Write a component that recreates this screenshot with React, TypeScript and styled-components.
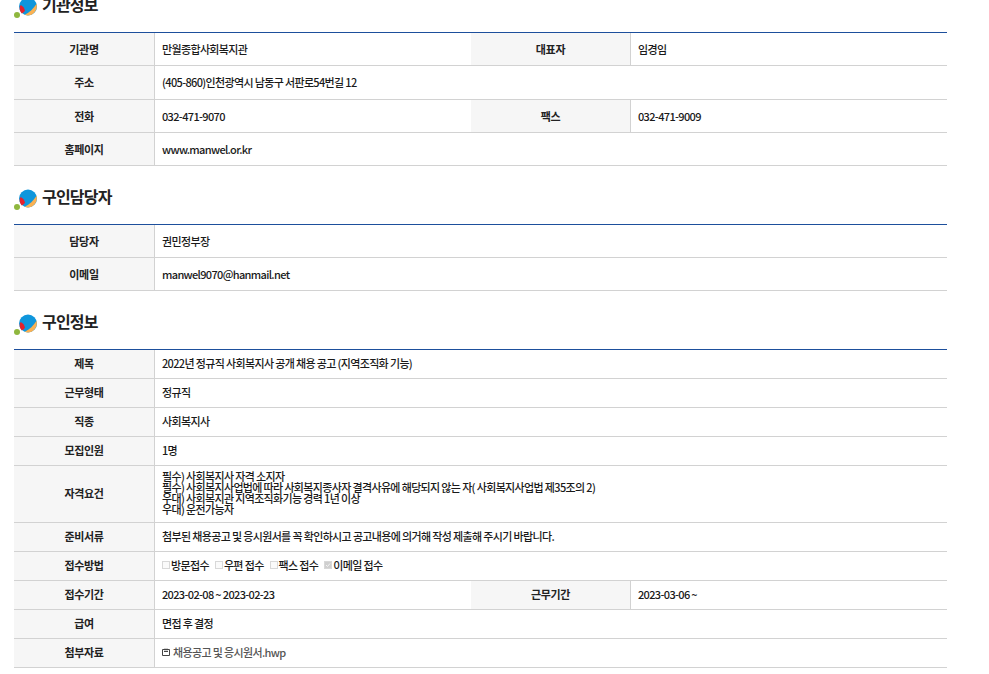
import React from "react";
import styled, { createGlobalStyle } from "styled-components";

const GlobalStyle = createGlobalStyle`
  html, body {
    margin: 0;
    padding: 0;
    background: #fff;
    overflow: hidden;
  }
  body {
    font-family: "Noto Sans CJK KR", "Noto Sans", sans-serif;
    color: #222;
  }
`;

// the page is scrolled a little in the reference, the first heading is cut off
const Page = styled.div`
  width: 933px;
  height: 700px;
  margin: -8px 0 0 14px;
`;

const Heading = styled.h3`
  display: flex;
  align-items: center;
  height: 32px;
  margin: 0 0 8px;
  font-size: 16px;
  font-weight: 700;
  letter-spacing: -0.8px;
  color: #222;
`;

const HeadingText = styled.span`
  margin-left: 4px;
  position: relative;
  top: -4px;
`;

const Table = styled.table<{ $rowHeight: number; $liftText?: number }>`
  width: 933px;
  table-layout: fixed;
  border-collapse: separate;
  border-spacing: 0;
  border-top: 1px solid #1d4f9c;
  margin-bottom: 18px;
  font-size: 11px;

  th, td {
    height: ${p => p.$rowHeight}px;
    box-sizing: border-box;
    border-bottom: 1px solid #d2d2d2;
    padding: 0 7px ${p => p.$liftText ?? 0}px;
  }
`;

const Th = styled.th`
  background: #f6f6f6;
  border-right: 1px solid #d2d2d2;
  font-weight: 700;
  letter-spacing: -0.35px;
  text-align: center;
  color: #222;
`;

const Td = styled.td`
  font-weight: 500;
  letter-spacing: -0.65px;
  text-align: left;
  color: #1a1a1a;
`;

const Lines = styled.div`
  line-height: 11px;
  padding: 5px 0 4px;
`;

const Checks = styled.div`
  display: flex;
  gap: 6px;
`;

const Check = styled.span`
  display: flex;
  align-items: center;
`;

const Box = styled.i<{ $on?: boolean }>`
  display: flex;
  align-items: center;
  justify-content: center;
  width: 8px;
  height: 8px;
  margin-right: 1px;
  box-sizing: border-box;
  border: 1px solid #d8d8d8;
  background: ${p => (p.$on ? "#cfcfcf" : "#fafafa")};
`;

const FileLink = styled.a`
  display: inline-flex;
  align-items: center;
  gap: 3px;
  color: #555;
`;

const Logo = () => (
  <svg width="24" height="24" viewBox="0 0 24 24">
    <circle cx="3" cy="19" r="3" fill="#8fb73e" />
    <circle cx="14" cy="10.5" r="9" fill="#0f96dc" />
    <path d="M22.6 7.8 C23.6 12 21.6 16.4 18 18.4 C15.2 19.8 12.6 19.6 10.8 18.8 C15.4 16.6 19.8 12.4 22.6 7.8Z" fill="#fbb152" />
    <path d="M6.6 9 C5 11.6 5.4 15 7.8 17.6 C9.4 16.8 10.6 15.8 11 14.6 C10.6 12.4 8.8 10 6.6 9Z" fill="#e4202c" />
  </svg>
);

const FileIcon = () => (
  <svg width="8" height="8" viewBox="0 0 8 8">
    <path d="M.5 1.5h7v6h-7z M2 3.5h4 M3 .5v2 M5 .5v2" fill="none" stroke="#444" strokeWidth="1" />
  </svg>
);

const Tick = () => (
  <svg width="6" height="6" viewBox="0 0 6 6">
    <path d="M1 3l1.5 1.5L5 1.5" fill="none" stroke="#f4f4f4" strokeWidth="1" />
  </svg>
);

const Section = ({ title }: { title: string }) => (
  <Heading>
    <Logo />
    <HeadingText>{title}</HeadingText>
  </Heading>
);

const Cols = () => (
  <colgroup>
    <col style={{ width: 141 }} />
    <col style={{ width: 316 }} />
    <col style={{ width: 160 }} />
    <col />
  </colgroup>
);

export default function App() {
  return (
    <Page>
      <GlobalStyle />
      <Section title="기관정보" />
      <Table $rowHeight={33.3}>
        <Cols />
        <tbody>
          <tr>
            <Th>기관명</Th>
            <Td>만월종합사회복지관</Td>
            <Th>대표자</Th>
            <Td>임경임</Td>
          </tr>
          <tr>
            <Th>주소</Th>
            <Td colSpan={3}>(405-860)인천광역시 남동구 서판로54번길 12</Td>
          </tr>
          <tr>
            <Th>전화</Th>
            <Td>032-471-9070</Td>
            <Th>팩스</Th>
            <Td>032-471-9009</Td>
          </tr>
          <tr>
            <Th>홈페이지</Th>
            <Td colSpan={3}>www.manwel.or.kr</Td>
          </tr>
        </tbody>
      </Table>

      <Section title="구인담당자" />
      <Table $rowHeight={33}>
        <Cols />
        <tbody>
          <tr>
            <Th>담당자</Th>
            <Td colSpan={3}>권민정부장</Td>
          </tr>
          <tr>
            <Th>이메일</Th>
            <Td colSpan={3}>manwel9070@hanmail.net</Td>
          </tr>
        </tbody>
      </Table>

      <Section title="구인정보" />
      <Table $rowHeight={29} $liftText={3}>
        <Cols />
        <tbody>
          <tr>
            <Th>제목</Th>
            <Td colSpan={3}>2022년 정규직 사회복지사 공개 채용 공고 (지역조직화 기능)</Td>
          </tr>
          <tr>
            <Th>근무형태</Th>
            <Td colSpan={3}>정규직</Td>
          </tr>
          <tr>
            <Th>직종</Th>
            <Td colSpan={3}>사회복지사</Td>
          </tr>
          <tr>
            <Th>모집인원</Th>
            <Td colSpan={3}>1명</Td>
          </tr>
          <tr>
            <Th>자격요건</Th>
            <Td colSpan={3}>
              <Lines>
                필수) 사회복지사 자격 소지자
                <br />
                필수) 사회복지사업법에 따라 사회복지종사자 결격사유에 해당되지 않는 자( 사회복지사업법 제35조의 2)
                <br />
                우대) 사회복지관 지역조직화기능 경력 1년 이상
                <br />
                우대) 운전가능자
              </Lines>
            </Td>
          </tr>
          <tr>
            <Th>준비서류</Th>
            <Td colSpan={3}>첨부된 채용공고 및 응시원서를 꼭 확인하시고 공고내용에 의거해 작성 제출해 주시기 바랍니다.</Td>
          </tr>
          <tr>
            <Th>접수방법</Th>
            <Td colSpan={3}>
              <Checks>
                <Check><Box />방문접수</Check>
                <Check><Box />우편 접수</Check>
                <Check><Box />팩스 접수</Check>
                <Check><Box $on><Tick /></Box>이메일 접수</Check>
              </Checks>
            </Td>
          </tr>
          <tr>
            <Th>접수기간</Th>
            <Td>2023-02-08 ~ 2023-02-23</Td>
            <Th>근무기간</Th>
            <Td>2023-03-06 ~</Td>
          </tr>
          <tr>
            <Th>급여</Th>
            <Td colSpan={3}>면접 후 결정</Td>
          </tr>
          <tr>
            <Th>첨부자료</Th>
            <Td colSpan={3}>
              <FileLink><FileIcon />채용공고 및 응시원서.hwp</FileLink>
            </Td>
          </tr>
        </tbody>
      </Table>
    </Page>
  );
}
